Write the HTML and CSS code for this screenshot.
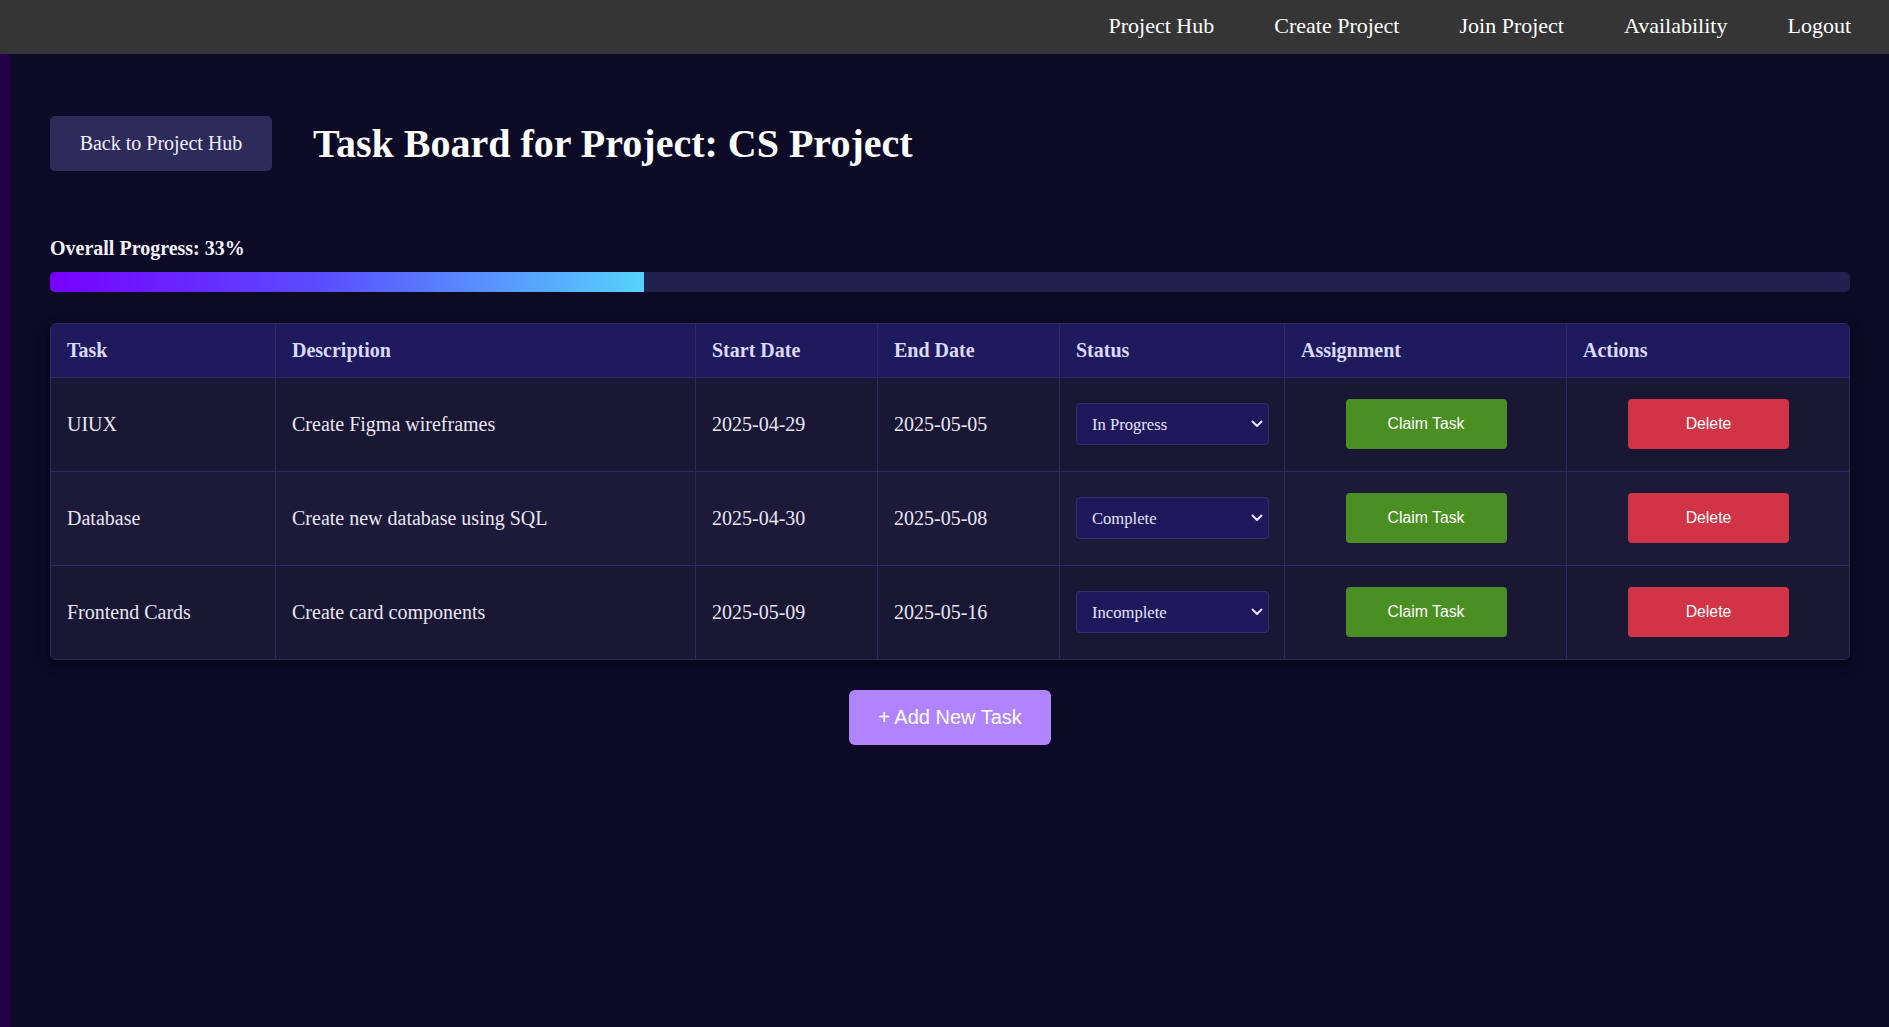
FILE: index.html
```html
<!DOCTYPE html>
<html lang="en">
<head>
<meta charset="utf-8">
<title>Task Board</title>
<link rel="stylesheet" href="styles.css">
</head>
<body>
<nav class="navbar">
  <a class="nav-link" href="#">Project Hub</a>
  <a class="nav-link" href="#">Create Project</a>
  <a class="nav-link" href="#">Join Project</a>
  <a class="nav-link" href="#">Availability</a>
  <a class="nav-link" href="#">Logout</a>
</nav>
<div class="page">
  <main class="content">
    <header class="board-header">
      <button class="back-btn">Back to Project Hub</button>
      <h1 class="board-title">Task Board for Project: CS Project</h1>
    </header>

    <section class="progress">
      <div class="progress-label">Overall Progress: 33%</div>
      <div class="progress-track"><div class="progress-fill" style="width: 33%"></div></div>
    </section>

    <div class="table-wrap">
      <table class="task-table">
        <colgroup>
          <col class="c-task"><col class="c-desc"><col class="c-start"><col class="c-end"><col class="c-status"><col class="c-assign"><col class="c-actions">
        </colgroup>
        <thead>
          <tr>
            <th>Task</th><th>Description</th><th>Start Date</th><th>End Date</th><th>Status</th><th>Assignment</th><th>Actions</th>
          </tr>
        </thead>
        <tbody>
          <tr>
            <td>UIUX</td>
            <td>Create Figma wireframes</td>
            <td>2025-04-29</td>
            <td>2025-05-05</td>
            <td><span class="select-wrap"><select class="status-select"><option>In Progress</option><option>Complete</option><option>Incomplete</option></select><svg class="chev" viewBox="0 0 12 8" width="12" height="8"><path d="M1.5 1.5 L6 6 L10.5 1.5" fill="none" stroke="currentColor" stroke-width="2" stroke-linecap="round" stroke-linejoin="round"/></svg></span></td>
            <td class="center"><button class="btn claim">Claim Task</button></td>
            <td class="center"><button class="btn delete">Delete</button></td>
          </tr>
          <tr>
            <td>Database</td>
            <td>Create new database using SQL</td>
            <td>2025-04-30</td>
            <td>2025-05-08</td>
            <td><span class="select-wrap"><select class="status-select"><option>Complete</option><option>In Progress</option><option>Incomplete</option></select><svg class="chev" viewBox="0 0 12 8" width="12" height="8"><path d="M1.5 1.5 L6 6 L10.5 1.5" fill="none" stroke="currentColor" stroke-width="2" stroke-linecap="round" stroke-linejoin="round"/></svg></span></td>
            <td class="center"><button class="btn claim">Claim Task</button></td>
            <td class="center"><button class="btn delete">Delete</button></td>
          </tr>
          <tr>
            <td>Frontend Cards</td>
            <td>Create card components</td>
            <td>2025-05-09</td>
            <td>2025-05-16</td>
            <td><span class="select-wrap"><select class="status-select"><option>Incomplete</option><option>In Progress</option><option>Complete</option></select><svg class="chev" viewBox="0 0 12 8" width="12" height="8"><path d="M1.5 1.5 L6 6 L10.5 1.5" fill="none" stroke="currentColor" stroke-width="2" stroke-linecap="round" stroke-linejoin="round"/></svg></span></td>
            <td class="center"><button class="btn claim">Claim Task</button></td>
            <td class="center"><button class="btn delete">Delete</button></td>
          </tr>
        </tbody>
      </table>
    </div>

    <div class="add-row">
      <button class="add-btn">+ Add New Task</button>
    </div>
  </main>
</div>
</body>
</html>
```

FILE: styles.css
```css
* { box-sizing: border-box; }

html, body {
  margin: 0;
  padding: 0;
  background: #0c0a26;
  font-family: "Liberation Serif", "Times New Roman", serif;
  color: #e8e6f4;
}

.navbar {
  height: 54px;
  background: #353535;
  display: flex;
  justify-content: flex-end;
  align-items: center;
  gap: 60px;
  padding: 0 38px 3px 0;
}

.nav-link {
  color: #ffffff;
  text-decoration: none;
  font-size: 22px;
}

.page {
  min-height: calc(100vh - 54px);
  border-left: 10px solid #220047;
}

.content {
  padding: 40px 39px 40px 40px;
}

.board-header {
  height: 98px;
  display: flex;
  align-items: center;
  gap: 41px;
}

.back-btn {
  height: 55px;
  width: 222px;
  padding: 0;
  background: #2e2a5a;
  color: #f2f0ff;
  border: none;
  border-radius: 5px;
  font-family: "Liberation Serif", "Times New Roman", serif;
  font-size: 20px;
}

.board-title {
  margin: 0;
  font-size: 40px;
  font-weight: bold;
  color: #ffffff;
}

.progress {
  margin-top: 45px;
}

.progress-label {
  font-size: 20px;
  font-weight: bold;
  line-height: 23px;
  color: #f4f2ff;
}

.progress-track {
  margin-top: 12px;
  height: 20px;
  background: #23204d;
  border-radius: 5px;
  overflow: hidden;
}

.progress-fill {
  height: 100%;
  background: linear-gradient(90deg, #7700ff 0%, #5a4cff 45%, #56d2fc 100%);
}

.table-wrap {
  margin-top: 31px;
  border: 1px solid #2e2963;
  border-radius: 6px;
  overflow: hidden;
  box-shadow: 0 4px 12px rgba(0, 0, 0, 0.45);
}

.task-table {
  width: 100%;
  table-layout: fixed;
  border-collapse: separate;
  border-spacing: 0;
}

.c-task { width: 225px; }
.c-desc { width: 420px; }
.c-start { width: 182px; }
.c-end { width: 182px; }
.c-status { width: 225px; }
.c-assign { width: 282px; }
.c-actions { width: 282px; }

.task-table th {
  background: #1f1a5e;
  color: #dcd8ff;
  font-size: 20px;
  font-weight: bold;
  line-height: 23px;
  text-align: left;
  padding: 15px 15px 15px 16px;
  border-bottom: 1px solid #2e2963;
  border-right: 1px solid #2e2963;
}

.task-table td {
  background: #1a1734;
  color: #e8e6f4;
  font-size: 20px;
  line-height: 23px;
  padding: 21px 15px 22px 16px;
  vertical-align: middle;
  border-bottom: 1px solid #2e2963;
  border-right: 1px solid #2e2963;
}

.task-table tbody tr:nth-child(even) td {
  background: #1c1939;
}

.task-table tr th:last-child,
.task-table tr td:last-child {
  border-right: none;
}

.task-table tbody tr:last-child td {
  border-bottom: none;
}

.task-table td.center {
  text-align: center;
}

.select-wrap {
  position: relative;
  display: block;
  color: #e6e3ff;
}

.status-select {
  display: block;
  width: 100%;
  height: 42px;
  appearance: none;
  -webkit-appearance: none;
  background: #1f195c;
  border: 1px solid #342e70;
  border-radius: 4px;
  color: #e6e3ff;
  font-family: "Liberation Serif", "Times New Roman", serif;
  font-size: 16.6px;
  padding: 0 30px 0 15px;
  outline: none;
}

.chev {
  position: absolute;
  right: 6px;
  top: 17px;
  width: 12px;
  height: 8px;
  pointer-events: none;
}

.btn {
  display: block;
  margin: 0 auto;
  width: 161px;
  height: 50px;
  border: none;
  border-radius: 4px;
  color: #ffffff;
  font-family: "Liberation Sans", Arial, sans-serif;
  font-size: 15.8px;
}

.btn.claim { background: #4a8f22; }
.btn.delete { background: #d13446; }

.add-row {
  margin-top: 30px;
  display: flex;
  justify-content: center;
}

.add-btn {
  width: 202px;
  height: 55px;
  border: none;
  border-radius: 6px;
  background: #b084ff;
  color: #ffffff;
  font-family: "Liberation Sans", Arial, sans-serif;
  font-size: 20px;
}
```
